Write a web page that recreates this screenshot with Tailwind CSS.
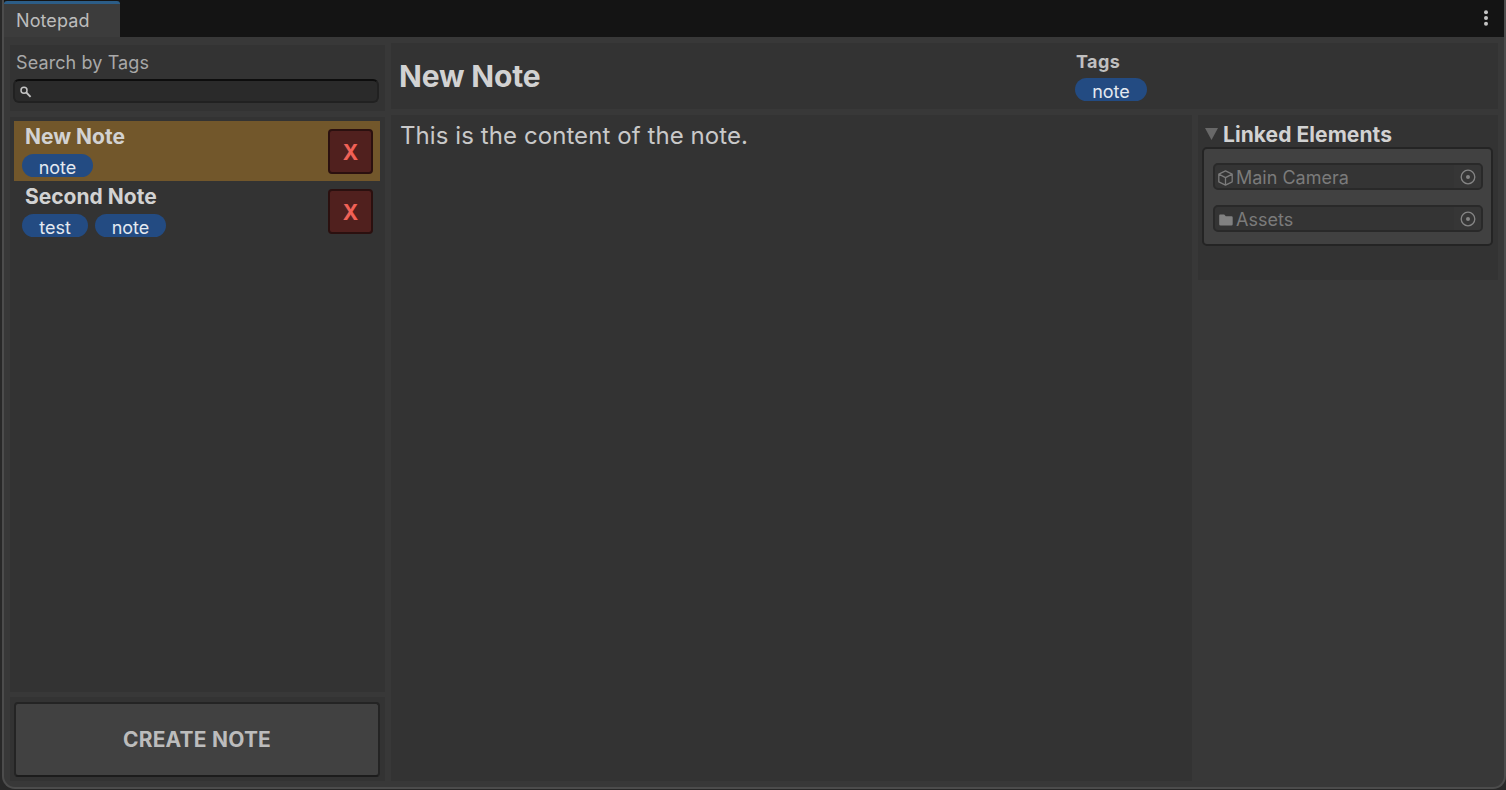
<!DOCTYPE html>
<html lang="en">
<head>
<meta charset="utf-8">
<title>Notepad</title>
<script src="https://cdn.jsdelivr.net/npm/@tailwindcss/browser@4"></script>
</head>
<body class="h-[790px] w-[1506px] overflow-hidden bg-[#282828] text-[#d2d2d2]" style="font-family: Inter, 'Liberation Sans', sans-serif">
<div class="ml-[2px] h-[789px] w-[1504px] overflow-hidden rounded-b-[13px] border-x-2 border-b-2 border-[#4c4c4c] bg-[#383838]">
  <header class="flex h-[37px] justify-between bg-[#141414] pt-px">
    <div class="h-9 w-[116px] overflow-hidden rounded-t-[3px] border-t-[3px] border-[#2c5d87] bg-[#3c3c3c] pl-3 text-[18px] leading-[34px] tracking-[0.1px] text-[#bdbdbd]"><span>Notepad</span></div>
    <svg class="mt-[9px] mr-[14px] h-[17px] w-2" viewBox="0 0 8 17" fill="#c4c4c4"><circle cx="4" cy="2.3" r="2"/><circle cx="4" cy="8" r="2"/><circle cx="4" cy="13.7" r="2"/></svg>
  </header>
  <main class="flex gap-[6px] pl-[6px]">
    <aside class="flex w-[375px] flex-col pt-2">
      <section class="h-[66px] bg-[#333333] pt-[6px]">
        <div class="pl-[6px] text-[18px] leading-6 tracking-[0.1px] text-[#a9a9a9]"><span>Search by Tags</span></div>
        <div class="mt-1 ml-[3px] flex h-6 w-[366px] items-center rounded-[6px] border-2 border-[#212121] border-t-[#0d0d0d] bg-[#2a2a2a] pl-[5px]">
          <svg class="mt-px size-3" viewBox="0 0 12 12" fill="none" stroke="#c4c4c4"><circle cx="4" cy="4.2" r="3" stroke-width="1.5"/><path d="M6.3 6.5 10.6 10.8" stroke-width="1.8"/></svg>
        </div>
      </section>
      <section class="mt-[6px] h-[575px] bg-[#333333] pt-1 pl-1">
        <div class="flex h-[60px] w-[366px] justify-between bg-[#72572b] pt-2 pr-[7px] pl-2">
          <div class="-mt-[5px]">
            <div class="pl-[3px] text-[21px] leading-[26px] font-bold"><span>New Note</span></div>
            <div class="mt-1 flex gap-[7px] text-[18px] text-[#e4e9f0]">
              <div class="h-[23px] w-[71px] rounded-full bg-[#234b82] text-center leading-[28px]"><span>note</span></div>
            </div>
          </div>
          <button class="h-[45px] w-[45px] rounded-[4px] border-2 border-[#2b100f] bg-[#50201e] pt-[2px] text-[21px] leading-[39px] font-bold text-[#f06156]"><span>X</span></button>
        </div>
        <div class="flex h-[60px] w-[366px] justify-between pt-2 pr-[7px] pl-2">
          <div class="-mt-[5px]">
            <div class="pl-[3px] text-[21px] leading-[26px] font-bold"><span>Second Note</span></div>
            <div class="mt-1 flex gap-[7px] text-[18px] text-[#e4e9f0]">
              <div class="h-[23px] w-[66px] rounded-full bg-[#234b82] text-center leading-[28px]"><span>test</span></div>
              <div class="h-[23px] w-[71px] rounded-full bg-[#234b82] text-center leading-[28px]"><span>note</span></div>
            </div>
          </div>
          <button class="h-[45px] w-[45px] rounded-[4px] border-2 border-[#2b100f] bg-[#50201e] pt-[2px] text-[21px] leading-[39px] font-bold text-[#f06156]"><span>X</span></button>
        </div>
      </section>
      <section class="mt-[5px] h-[84px] bg-[#333333] pt-[5px] pl-1">
        <button class="h-[75px] w-[366px] rounded-[4px] border-2 border-[#242424] border-b-[#1c1c1c] bg-[#414141] pt-px text-[21px] leading-[70px] font-bold tracking-[0.2px] text-[#bcbcbc]"><span>CREATE NOTE</span></button>
      </section>
    </aside>
    <div class="w-[1107px] pt-[6px]">
      <section class="flex h-[66px] bg-[#333333]">
        <h1 class="w-[684px] pt-[15px] pl-2 text-[30px] leading-9 font-bold tracking-[-0.15px]"><span>New Note</span></h1>
        <div class="pt-[7px]">
          <div class="pl-px text-[18px] leading-6 font-bold tracking-[0.4px] text-[#c0c0c0]"><span>Tags</span></div>
          <div class="mt-1 h-[23px] w-[72px] rounded-full bg-[#234b82] text-center text-[18px] leading-[28px] text-[#e4e9f0]"><span>note</span></div>
        </div>
      </section>
      <div class="mt-[6px] flex items-start gap-[6px]">
        <section class="h-[666px] w-[801px] bg-[#333333] pt-[6px] pl-[9px] text-[24px] leading-[30px] tracking-[0.08px] text-[#c9c9c9]"><span>This is the content of the note.</span></section>
        <section class="h-[165px] w-[300px] bg-[#333333] pt-[6px] pl-1">
          <div class="flex h-[26px] items-center pl-[3px]">
            <svg class="h-3 w-[13px]" viewBox="0 0 13 12" fill="#686868"><path d="M0 0H13L6.5 12Z"/></svg>
            <h2 class="ml-[5px] pt-[2px] text-[21px] leading-6 font-bold tracking-[0.06px]"><span>Linked Elements</span></h2>
          </div>
          <div class="flex h-[99px] w-[291px] flex-col gap-[15px] rounded-[5px] border-2 border-[#242424] bg-[#414141] pt-[14px] pl-[9px]">
            <div class="flex h-[27px] w-[270px] items-center rounded-[5px] border-2 border-[#292929] bg-[#343434] pl-[3px] text-[18px] leading-[23px] text-[#7b7b7b]">
              <svg class="mt-[2px] h-4 w-[15px] shrink-0" viewBox="0 0 15 16" fill="none" stroke="#7b7b7b" stroke-width="1.3" stroke-linejoin="round"><path d="M7.5.8 14.2 4.1V11.8L7.5 15.2.8 11.8V4.1ZM.8 4.1 7.5 7.6 14.2 4.1M7.5 7.6V15.2"/></svg>
              <div class="ml-[3px] w-[220px] pt-[2px]"><span>Main Camera</span></div>
              <div class="flex h-full w-[27px] items-center justify-center rounded-r-[3px] bg-[#363636]"><svg class="size-4" viewBox="0 0 16 16"><circle cx="8" cy="8" r="6.8" fill="none" stroke="#858585" stroke-width="1.3"/><circle cx="8" cy="8" r="2" fill="#858585"/></svg></div>
            </div>
            <div class="flex h-[27px] w-[270px] items-center rounded-[5px] border-2 border-[#292929] bg-[#343434] pl-[3px] text-[18px] leading-[23px] text-[#7b7b7b]">
              <svg class="mt-[2px] h-4 w-[15px] shrink-0" viewBox="0 0 15 16" fill="#818181"><path d="M2 2.5H6.2L7.8 4.2H13.5Q14.7 4.2 14.7 5.4V12.3Q14.7 13.5 13.5 13.5H2.4Q1.2 13.5 1.2 12.3V3.5Q1.2 2.5 2 2.5Z"/></svg>
              <div class="ml-[3px] w-[220px] pt-[2px]"><span>Assets</span></div>
              <div class="flex h-full w-[27px] items-center justify-center rounded-r-[3px] bg-[#363636]"><svg class="size-4" viewBox="0 0 16 16"><circle cx="8" cy="8" r="6.8" fill="none" stroke="#858585" stroke-width="1.3"/><circle cx="8" cy="8" r="2" fill="#858585"/></svg></div>
            </div>
          </div>
        </section>
      </div>
    </div>
  </main>
</div>
</body>
</html>
